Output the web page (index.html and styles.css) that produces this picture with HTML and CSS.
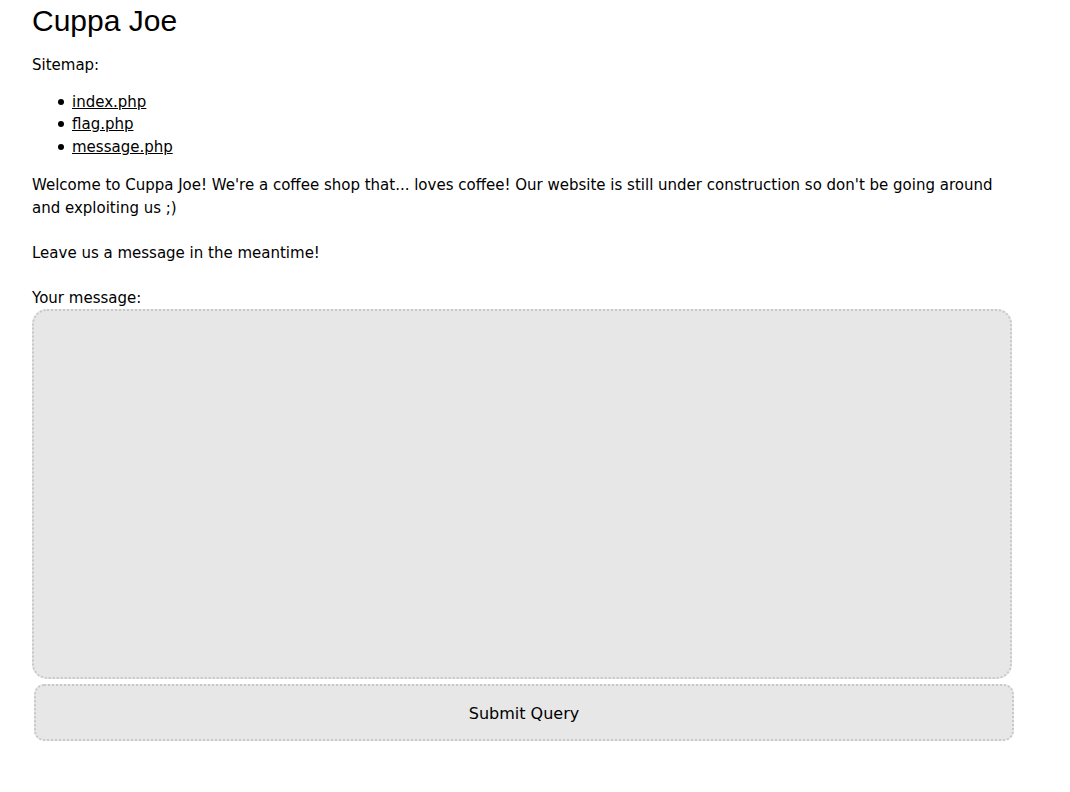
FILE: index.html
```html
<!DOCTYPE html>
<html>
<head>
<meta charset="utf-8">
<title>Cuppa Joe</title>
<link rel="stylesheet" href="styles.css">
</head>
<body>
<div class="page">
  <h1 class="title">Cuppa Joe</h1>
  <p class="text">Sitemap:</p>
  <ul class="sitemap">
    <li><a href="#">index.php</a></li>
    <li><a href="#">flag.php</a></li>
    <li><a href="#">message.php</a></li>
  </ul>
  <p class="text">Welcome to Cuppa Joe! We're a coffee shop that... loves coffee! Our website is still under construction so don't be going around and exploiting us ;)<br><br>Leave us a message in the meantime!<br><br>Your message:</p>
  <form class="form">
    <textarea class="message"></textarea>
    <button type="button" class="submit">Submit Query</button>
  </form>
</div>
</body>
</html>
```
FILE: styles.css
```css
html, body {
  margin: 0;
  padding: 0;
  background: #fff;
}
.page {
  width: 980px;
  margin-left: 32px;
  font-family: "DejaVu Sans", sans-serif;
  font-size: 15px;
  line-height: 22.5px;
  color: #000;
}
.title {
  font-family: "Liberation Sans", Arial, sans-serif;
  font-weight: normal;
  font-size: 30px;
  line-height: 42px;
  margin: 0 0 12px 0;
}
.text {
  margin: 0;
}
.sitemap {
  margin: 14px 0 16px 0;
  padding-left: 40px;
  list-style: none;
}
.sitemap li::before {
  content: "";
  display: inline-block;
  width: 6px;
  height: 6px;
  border-radius: 50%;
  background: #000;
  margin-left: -14px;
  margin-right: 8px;
  vertical-align: 2px;
}
.sitemap a {
  color: #000;
  text-decoration: underline;
}
.form {
  display: flex;
  flex-direction: column;
  gap: 5px;
}
.message {
  box-sizing: border-box;
  width: 980px;
  height: 370px;
  margin: 0;
  background: #e7e7e7;
  border: 2px dotted #c8c8c8;
  border-radius: 15px;
  resize: none;
}
.submit {
  box-sizing: border-box;
  width: 980px;
  height: 57px;
  margin: 0 0 0 2px;
  padding-top: 2px;
  background: #e7e7e7;
  border: 2px dotted #c8c8c8;
  border-radius: 10px;
  font-family: "DejaVu Sans", sans-serif;
  font-size: 16px;
  color: #000;
}
```
